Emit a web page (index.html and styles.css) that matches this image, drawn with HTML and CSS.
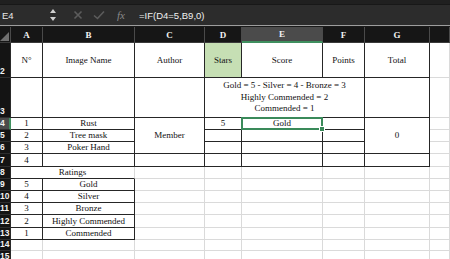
FILE: index.html
```html
<!DOCTYPE html>
<html>
<head>
<meta charset="utf-8">
<link rel="stylesheet" href="styles.css">
</head>
<body>
<div class="topstrip"></div>
<div class="fbar">
  <div class="namebox">E4</div>
  <svg class="spin" width="8" height="14" viewBox="0 0 8 14"><path d="M4 1 L7 5 L1 5 Z" fill="#d0d0d0"/><path d="M1 9 L7 9 L4 13 Z" fill="#d0d0d0"/></svg>
  <svg class="ico ico-x" width="10" height="10" viewBox="0 0 10 10"><path d="M1.5 1.5 L8.5 8.5 M8.5 1.5 L1.5 8.5" stroke="#5c5c5c" stroke-width="1.6" fill="none"/></svg>
  <svg class="ico ico-ok" width="12" height="10" viewBox="0 0 12 10"><path d="M1 5.5 L4.5 8.5 L11 1.5" stroke="#5c5c5c" stroke-width="1.6" fill="none"/></svg>
  <span class="fx">fx</span>
  <div class="formula">=IF(D4=5,B9,0)</div>
</div>
<div class="sep"></div>
<div class="sheet">
  <!-- header -->
  <div class="ch corner"><svg width="9" height="9" viewBox="0 0 9 9"><path d="M9 0 L9 9 L0 9 Z" fill="#6f6f6f"/></svg></div>
  <div class="ch">A</div><div class="ch">B</div><div class="ch">C</div><div class="ch">D</div>
  <div class="ch ch-active">E</div><div class="ch">F</div><div class="ch">G</div><div class="ch"></div>

  <!-- row 2 -->
  <div class="rh">2</div>
  <div class="c t">N°</div><div class="c t">Image Name</div><div class="c t">Author</div>
  <div class="c t green">Stars</div><div class="c t">Score</div><div class="c t">Points</div><div class="c t">Total</div><div class="c"></div>

  <!-- row 3 -->
  <div class="rh">3</div>
  <div class="c t"></div><div class="c t"></div><div class="c t"></div>
  <div class="c t span3 multi">Gold = 5 - Silver = 4 - Bronze = 3<br>Highly Commended = 2<br>Commended = 1</div>
  <div class="c t"></div><div class="c"></div>

  <!-- row 4 -->
  <div class="rh rh-active">4</div>
  <div class="c t">1</div><div class="c t">Rust</div><div class="c t rspan3">Member</div>
  <div class="c t">5</div><div class="c t sel">Gold</div><div class="c t"></div><div class="c t rspan3">0</div><div class="c"></div>

  <!-- row 5 -->
  <div class="rh">5</div>
  <div class="c t">2</div><div class="c t">Tree mask</div>
  <div class="c t"></div><div class="c t"></div><div class="c t"></div><div class="c"></div>

  <!-- row 6 -->
  <div class="rh">6</div>
  <div class="c t">3</div><div class="c t">Poker Hand</div>
  <div class="c t"></div><div class="c t"></div><div class="c t"></div><div class="c"></div>

  <!-- row 7 -->
  <div class="rh">7</div>
  <div class="c t">4</div><div class="c t"></div><div class="c t"></div><div class="c t"></div>
  <div class="c t"></div><div class="c t"></div><div class="c t"></div><div class="c"></div>

  <!-- row 8 -->
  <div class="rh">8</div>
  <div class="c span2 tb">Ratings</div>
  <div class="c"></div><div class="c"></div><div class="c"></div><div class="c"></div><div class="c"></div><div class="c"></div>

  <!-- rows 9-13 -->
  <div class="rh">9</div>
  <div class="c t">5</div><div class="c t">Gold</div>
  <div class="c"></div><div class="c"></div><div class="c"></div><div class="c"></div><div class="c"></div><div class="c"></div>

  <div class="rh">10</div>
  <div class="c t">4</div><div class="c t">Silver</div>
  <div class="c"></div><div class="c"></div><div class="c"></div><div class="c"></div><div class="c"></div><div class="c"></div>

  <div class="rh">11</div>
  <div class="c t">3</div><div class="c t">Bronze</div>
  <div class="c"></div><div class="c"></div><div class="c"></div><div class="c"></div><div class="c"></div><div class="c"></div>

  <div class="rh">12</div>
  <div class="c t">2</div><div class="c t">Highly Commended</div>
  <div class="c"></div><div class="c"></div><div class="c"></div><div class="c"></div><div class="c"></div><div class="c"></div>

  <div class="rh">13</div>
  <div class="c t">1</div><div class="c t">Commended</div>
  <div class="c"></div><div class="c"></div><div class="c"></div><div class="c"></div><div class="c"></div><div class="c"></div>

  <!-- rows 14-15 -->
  <div class="rh">14</div>
  <div class="c"></div><div class="c"></div><div class="c"></div><div class="c"></div><div class="c"></div><div class="c"></div><div class="c"></div><div class="c"></div>

  <div class="rh rh-last">15</div>
  <div class="c"></div><div class="c"></div><div class="c"></div><div class="c"></div><div class="c"></div><div class="c"></div><div class="c"></div><div class="c"></div>
</div>
</body>
</html>
```

FILE: styles.css
```css
html, body {
  margin: 0;
  padding: 0;
}
body {
  width: 450px;
  height: 259px;
  overflow: hidden;
  background: #ffffff;
  font-family: "Liberation Serif", "Times New Roman", serif;
}
.topstrip {
  height: 4px;
  background: #202020;
  border-bottom: 1px solid #181818;
}
.fbar {
  height: 20px;
  background: #2c2c2c;
  display: flex;
  align-items: center;
  font-family: "Liberation Sans", Arial, sans-serif;
}
.namebox {
  width: 49px;
  padding-left: 2px;
  box-sizing: border-box;
  color: #e6e6e6;
  font-size: 9.5px;
}
.ico-x {
  margin-left: 16px;
}
.ico-ok {
  margin-left: 10px;
}
.fx {
  margin-left: 12px;
  font-family: "Liberation Serif", serif;
  font-style: italic;
  font-size: 11px;
  color: #8a8a8a;
  width: 14px;
}
.formula {
  margin-left: 8px;
  color: #f0f0f0;
  font-size: 9.5px;
}
.sep {
  height: 1px;
  background: #9d9d9d;
  border-bottom: 1px solid #1a1a1a;
}
.sheet {
  display: grid;
  grid-template-columns: 11px 32px 92px 70px 37px 81px 42px 65px 20px;
  grid-template-rows: 16px 35px 40px 12px 12px 12px 13px 12px 12px 12px 12px 13px 12px 11px 12px;
  font-size: 9px;
  color: #111;
}
.ch {
  background: #161616;
  color: #f2f2f2;
  font-weight: bold;
  font-size: 9px;
  display: flex;
  align-items: center;
  justify-content: center;
  box-sizing: border-box;
  border-right: 1px solid #4a4a4a;
  border-bottom: 1px solid #3a3a3a;
}
.corner {
  justify-content: flex-end;
  align-items: flex-end;
  padding: 0 1px 1px 0;
}
.ch-active {
  background: #4b4b4b;
  border-bottom: 2px solid #3f8f5f;
}
.rh {
  background: #141414;
  color: #f2f2f2;
  font-family: "Liberation Sans", Arial, sans-serif;
  font-weight: bold;
  font-size: 8.5px;
  line-height: 11px;
  display: flex;
  align-items: flex-end;
  box-sizing: border-box;
  border-bottom: 1px solid #2e2e2e;
  border-right: 1px solid #2a2a2a;
  overflow: hidden;
  white-space: nowrap;
}
.rh-last {
  align-items: flex-start;
}
.rh-active {
  background: #4b4b4b;
  border-right: 2px solid #3f8f5f;
}
.c {
  box-sizing: border-box;
  border-right: 1px solid #dadada;
  border-bottom: 1px solid #dadada;
  display: flex;
  align-items: center;
  justify-content: center;
  text-align: center;
  white-space: nowrap;
  line-height: 11px;
  position: relative;
}
.t {
  border-right-color: #262626;
  border-bottom-color: #262626;
}
.tb {
  border-bottom-color: #262626;
}
.green {
  background: #c6dfb4;
}
.span2 {
  grid-column: span 2;
}
.span3 {
  grid-column: span 3;
}
.rspan3 {
  grid-row: span 3;
}
.multi {
  line-height: 11.5px;
}
.sel::after {
  content: "";
  position: absolute;
  left: -1px;
  top: -1px;
  right: -1px;
  bottom: -1px;
  border: 2px solid #3a8a5a;
}
.sel::before {
  content: "";
  position: absolute;
  right: -3px;
  bottom: -3px;
  width: 4px;
  height: 4px;
  background: #3a8a5a;
  border: 1px solid #ffffff;
  z-index: 2;
}
```
